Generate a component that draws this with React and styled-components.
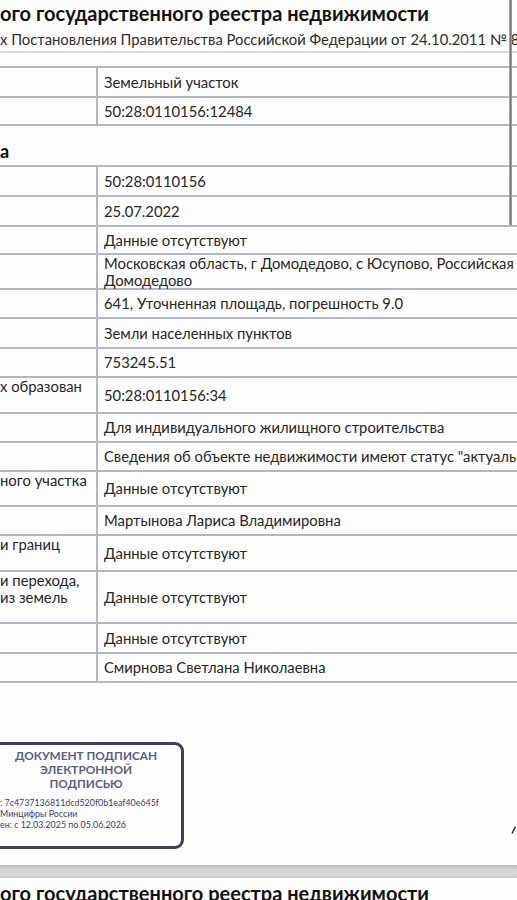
import React from "react";
import styled, { createGlobalStyle } from "styled-components";

const GlobalStyle = createGlobalStyle`
  html, body { margin: 0; padding: 0; background: #fdfdfd; }
  body {
    font-family: Lato, "Noto Sans", "Liberation Sans", sans-serif;
    overflow: hidden;
  }
`;

const Viewport = styled.div`
  width: 517px;
  height: 900px;
  overflow: hidden;
  background: #fdfdfd;
  color: #262626;
`;

const Sheet = styled.section`
  position: relative;
  padding-top: ${(p) => p.$top || 0}px;
`;

const EdgeBar = styled.div`
  position: absolute;
  left: 509px;
  top: 0;
  width: 3px;
  height: 225px;
  background: linear-gradient(to right, #b9b9b9, #7a7a7a 50%, #a8a8a8);
`;

const Title = styled.h1`
  margin: 0;
  padding-top: 1px;
  font-size: 20px;
  line-height: 24px;
  font-weight: 700;
  color: #121212;
  white-space: nowrap;
`;

const Subtitle = styled.p`
  margin: 4px 0 0;
  font-size: 14.8px;
  line-height: 20px;
  color: #2e2e2e;
  white-space: nowrap;
`;

const Rule = styled.hr`
  margin: 2px 0 0;
  border: 0;
  height: 2px;
  background: #d6d9e1;
`;

const Table = styled.div`
  margin-top: ${(p) => p.$mt}px;
  border-top: 2px solid #b1b7c7;
`;

const Row = styled.div`
  display: grid;
  grid-template-columns: 98px minmax(0, 1fr);
  height: ${(p) => p.$h}px;
  box-sizing: border-box;
  border-bottom: 2px solid #b1b7c7;
  font-size: 14.8px;
  line-height: 17px;
`;

const LabelCell = styled.div`
  border-right: 2px solid #b1b7c7;
  white-space: nowrap;
  overflow: hidden;
  color: #262626;
`;

const ValueCell = styled.div`
  display: flex;
  flex-direction: column;
  justify-content: center;
  padding-left: 6px;
  white-space: nowrap;
  color: #262626;
`;

const SectionHeading = styled.h2`
  margin: 14px 0 0;
  font-size: 18px;
  line-height: 22px;
  font-weight: 700;
  color: #121212;
`;

const StampRow = styled.div`
  display: flex;
  justify-content: space-between;
  align-items: flex-end;
  margin-top: 59px;
`;

const Stamp = styled.div`
  margin-left: -12px;
  width: 196px;
  box-sizing: border-box;
  border: 3px solid #3a3e68;
  border-radius: 9px;
  padding: 4px 0 16px 9px;
`;

const StampCaps = styled.div`
  text-align: center;
  padding-right: 9px;
  font-size: 11.8px;
  line-height: 14px;
  font-weight: 700;
  color: #5a5f82;
`;

const StampMeta = styled.div`
  margin-top: 7px;
  font-size: 8.9px;
  line-height: 10.8px;
  color: #383d6c;
  white-space: nowrap;
`;

const Mark = styled.svg`
  margin: 0 1px 15px 0;
  display: block;
`;

const PageGap = styled.div`
  margin-top: 16px;
  height: 13px;
  background: linear-gradient(#bdbdbd, #d3d3d3 30%, #d9d9d9 75%, #c9c9c9);
`;

const table1 = [
  { h: 30, v: "Земельный участок" },
  { h: 28, v: "50:28:0110156:12484" },
];

const table2 = [
  { h: 30, v: "50:28:0110156" },
  { h: 30, v: "25.07.2022" },
  { h: 28, v: "Данные отсутствуют" },
  {
    h: 35,
    v: [
      "Московская область, г Домодедово, с Юсупово, Российская Федерация, городской округ",
      "Домодедово",
    ],
  },
  { h: 29, v: "641, Уточненная площадь, погрешность 9.0" },
  { h: 30, v: "Земли населенных пунктов" },
  { h: 29, v: "753245.51" },
  { h: 36, l: ["х образован"], v: "50:28:0110156:34" },
  { h: 29, v: "Для индивидуального жилищного строительства" },
  { h: 29, v: 'Сведения об объекте недвижимости имеют статус "актуальные"' },
  { h: 35, l: ["ного участка"], v: "Данные отсутствуют" },
  { h: 29, v: "Мартынова Лариса Владимировна" },
  { h: 36, l: ["и границ"], v: "Данные отсутствуют" },
  { h: 52, l: ["и перехода,", "из земель"], v: "Данные отсутствуют" },
  { h: 30, v: "Данные отсутствуют" },
  { h: 29, v: "Смирнова Светлана Николаевна" },
];

function Lines({ items }) {
  const arr = Array.isArray(items) ? items : [items];
  return arr.map((t, i) => <div key={i}>{t}</div>);
}

function DataTable({ rows, mt }) {
  return (
    <Table $mt={mt}>
      {rows.map((r, i) => (
        <Row key={i} $h={r.h}>
          <LabelCell>{r.l ? <Lines items={r.l} /> : null}</LabelCell>
          <ValueCell>
            <Lines items={r.v} />
          </ValueCell>
        </Row>
      ))}
    </Table>
  );
}

export default function App() {
  return (
    <Viewport>
      <GlobalStyle />
      <Sheet>
        <EdgeBar />
        <Title>ого государственного реестра недвижимости</Title>
        <Subtitle>
          х Постановления Правительства Российской Федерации от 24.10.2011 № 861
        </Subtitle>
        <Rule />
        <DataTable rows={table1} mt={13} />
        <SectionHeading>а</SectionHeading>
        <DataTable rows={table2} mt={3} />
        <StampRow>
          <Stamp>
            <StampCaps>
              <div>ДОКУМЕНТ ПОДПИСАН</div>
              <div>ЭЛЕКТРОННОЙ</div>
              <div>ПОДПИСЬЮ</div>
            </StampCaps>
            <StampMeta>
              <div>: 7c4737136811dcd520f0b1eaf40e645f</div>
              <div>Минцифры России</div>
              <div>ен: с 12.03.2025 по 05.06.2026</div>
            </StampMeta>
          </Stamp>
          <Mark width="5" height="8" viewBox="0 0 5 8">
            <path d="M4.5 0.5 L1 7.5" stroke="#222" strokeWidth="1.4" fill="none" />
          </Mark>
        </StampRow>
      </Sheet>
      <PageGap />
      <Sheet $top={2}>
        <Title>ого государственного реестра недвижимости</Title>
      </Sheet>
    </Viewport>
  );
}
